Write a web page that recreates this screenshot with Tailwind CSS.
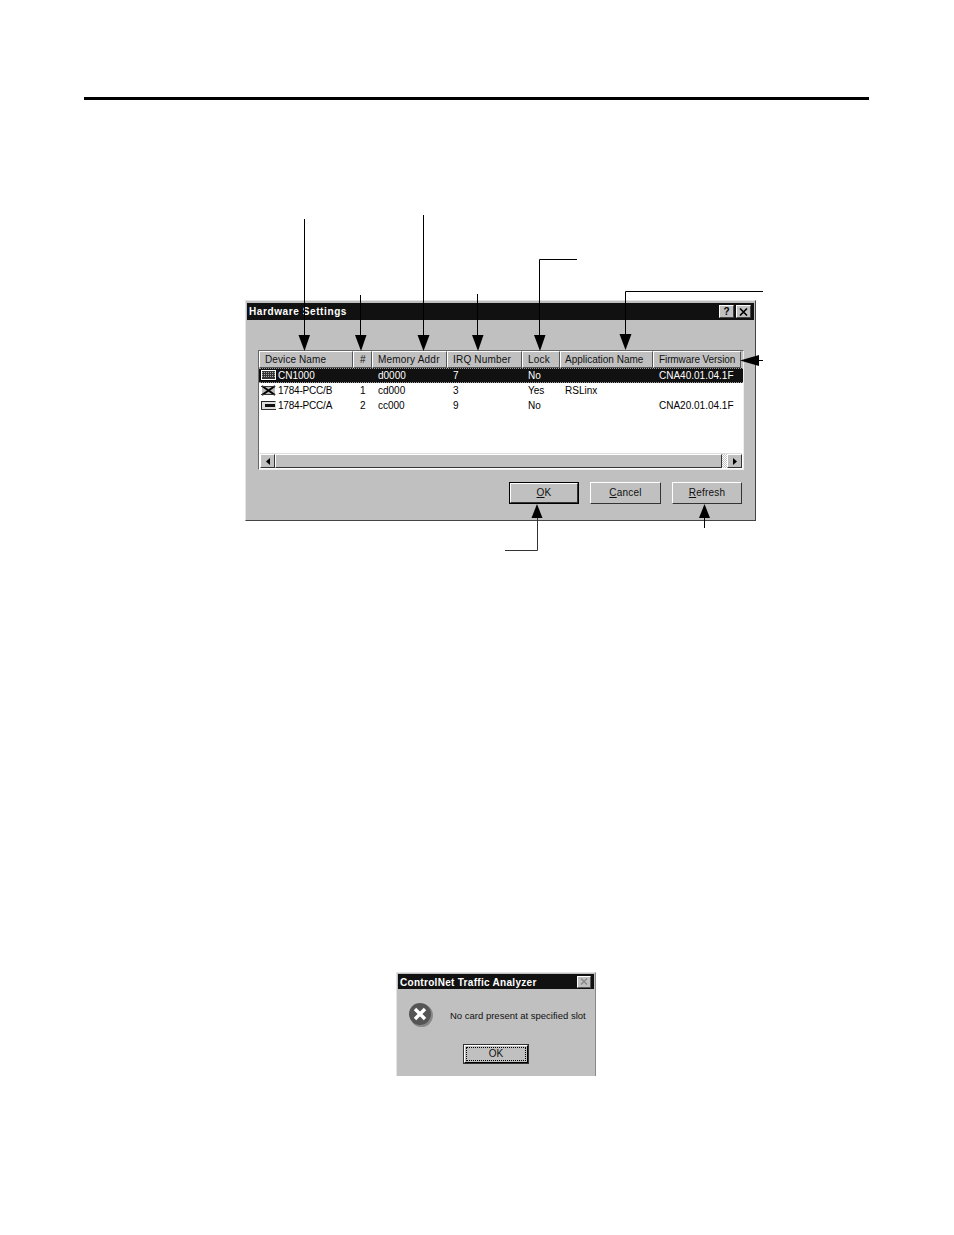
<!DOCTYPE html>
<html>
<head>
<meta charset="utf-8">
<script src="https://cdn.jsdelivr.net/npm/@tailwindcss/browser@4"></script>
</head>
<body class="bg-white">
<div class="relative w-[954px] h-[1235px] bg-white overflow-hidden font-['Liberation_Sans',Arial,sans-serif] text-[10px] leading-none text-black">
  <div class="pt-[97px] px-[84px]"><div class="w-[785px] h-[3px] bg-black"></div></div>

  <!-- Hardware Settings window -->
  <div class="mt-[200px] ml-[245px] w-[511px] h-[221px] bg-[#c0c0c0] border border-t-[#e4e4e4] border-l-[#e4e4e4] border-r-[#444] border-b-[#444] pt-[2px] px-[1px] flex flex-col">
    <div class="h-[17px] bg-[#111] flex items-center justify-between pl-[2px] pr-[3px] text-white font-bold tracking-[0.6px]">
      <span>Hardware Settings</span>
      <div class="flex gap-[2px]">
        <div class="w-[15px] h-[13px] bg-[#c0c0c0] border border-t-white border-l-white border-r-[#444] border-b-[#444] flex items-center justify-center text-black font-bold text-[10px] tracking-normal">?</div>
        <div class="w-[15px] h-[13px] bg-[#c0c0c0] border border-t-white border-l-white border-r-[#444] border-b-[#444] flex items-center justify-center">
          <svg width="9" height="8" viewBox="0 0 9 8"><path d="M1 0.5 L8 7.5 M8 0.5 L1 7.5" stroke="#000" stroke-width="1.6"/></svg>
        </div>
      </div>
    </div>

    <!-- list -->
    <div class="mt-[30px] ml-[11px] w-[486px] h-[120px] bg-white border border-t-[#666] border-l-[#666] border-r-[#eee] border-b-[#eee] flex flex-col">
      <div class="grid grid-cols-[94px_19px_75px_75px_38px_93px_88px] h-[17px] shrink-0 bg-[#c0c0c0] text-[#111]">
        <div class="border border-t-white border-l-white border-r-[#555] border-b-[#555] pl-[5px] flex items-center tracking-[0.1px]">Device Name</div>
        <div class="border border-t-white border-l-white border-r-[#555] border-b-[#555] pl-[6px] flex items-center">#</div>
        <div class="border border-t-white border-l-white border-r-[#555] border-b-[#555] pl-[5px] flex items-center tracking-[0.2px]">Memory Addr</div>
        <div class="border border-t-white border-l-white border-r-[#555] border-b-[#555] pl-[5px] flex items-center tracking-[0.2px]">IRQ Number</div>
        <div class="border border-t-white border-l-white border-r-[#555] border-b-[#555] pl-[5px] flex items-center tracking-[0.2px]">Lock</div>
        <div class="border border-t-white border-l-white border-r-[#555] border-b-[#555] pl-[4px] flex items-center">Application Name</div>
        <div class="border border-t-white border-l-white border-r-[#555] border-b-[#555] pl-[5px] flex items-center whitespace-nowrap overflow-hidden tracking-[-0.1px]">Firmware Version</div>
      </div>
      <div class="grid grid-cols-[94px_19px_75px_75px_38px_93px_88px] h-[15px] shrink-0 items-center bg-[#111] text-white border-y border-dotted border-[#999]">
        <div class="flex items-center gap-[2px] pl-[1px]">
          <svg width="16" height="11" viewBox="0 0 16 11"><rect width="16" height="11" fill="#fff"/><rect x="2" y="1" width="13" height="8" fill="#333"/><path d="M2 2.5h13M2 4.5h13M2 6.5h13" stroke="#aaa" stroke-dasharray="1 1"/><path d="M0 10.5h16" stroke="#000"/><path d="M0.5 0V11" stroke="#000"/></svg>
          <span>CN1000</span>
        </div>
        <div></div><div class="pl-[6px]">d0000</div><div class="pl-[6px]">7</div><div class="pl-[6px]">No</div><div class="pl-[5px]"></div><div class="pl-[6px]">CNA40.01.04.1F</div>
      </div>
      <div class="grid grid-cols-[94px_19px_75px_75px_38px_93px_88px] h-[15px] shrink-0 items-center">
        <div class="flex items-center gap-[2px] pl-[1px]">
          <svg width="16" height="11" viewBox="0 0 16 11"><rect x="2" y="2" width="13" height="7" fill="#bbb"/><path d="M2 1 L15 10 M15 1 L2 10" stroke="#000" stroke-width="2"/><path d="M1 1.5h14M1 9.5h14" stroke="#333"/></svg>
          <span class="tracking-[-0.2px]">1784-PCC/B</span>
        </div>
        <div class="pl-[7px]">1</div><div class="pl-[6px]">cd000</div><div class="pl-[6px]">3</div><div class="pl-[6px]">Yes</div><div class="pl-[5px]">RSLinx</div><div></div>
      </div>
      <div class="grid grid-cols-[94px_19px_75px_75px_38px_93px_88px] h-[15px] shrink-0 items-center">
        <div class="flex items-center gap-[2px] pl-[1px]">
          <svg width="16" height="11" viewBox="0 0 16 11"><rect x="1" y="1.5" width="15" height="8" fill="#ddd"/><path d="M1 1.5H15.5M1.5 1V10" stroke="#222"/><rect x="5" y="4" width="10" height="3" fill="#111"/><path d="M1 9.5h15" stroke="#333"/></svg>
          <span class="tracking-[-0.2px]">1784-PCC/A</span>
        </div>
        <div class="pl-[7px]">2</div><div class="pl-[6px]">cc000</div><div class="pl-[6px]">9</div><div class="pl-[6px]">No</div><div></div><div class="pl-[6px]">CNA20.01.04.1F</div>
      </div>
      <div class="flex-1"></div>
      <!-- scrollbar -->
      <div class="h-[15px] shrink-0 mx-px mb-px bg-[#c0c0c0] flex border-t border-[#ddd]">
        <div class="w-[15px] border border-t-white border-l-white border-r-[#333] border-b-[#333] flex items-center justify-center"><svg width="4" height="7" viewBox="0 0 4 7"><path d="M4 0 L0 3.5 L4 7 Z" fill="#000"/></svg></div>
        <div class="flex-1 border border-t-white border-l-white border-r-[#333] border-b-[#333]"></div>
        <div class="w-[5px] bg-[repeating-conic-gradient(#fff_0_25%,#c0c0c0_0_50%)] bg-[length:2px_2px]"></div>
        <div class="w-[15px] border border-t-white border-l-white border-r-[#333] border-b-[#333] flex items-center justify-center"><svg width="4" height="7" viewBox="0 0 4 7"><path d="M0 0 L4 3.5 L0 7 Z" fill="#000"/></svg></div>
      </div>
    </div>

    <!-- buttons -->
    <div class="mt-[12px] flex justify-end pr-[12px] text-[#111] tracking-[0.2px]">
      <div class="w-[70px] h-[22px] mr-[11px] border border-black">
        <div class="w-full h-full bg-[#c0c0c0] border border-t-white border-l-white border-r-[#333] border-b-[#333] flex items-center justify-center"><span><span class="underline">O</span>K</span></div>
      </div>
      <div class="w-[71px] h-[22px] mr-[11px] bg-[#c0c0c0] border border-t-white border-l-white border-r-[#333] border-b-[#333] flex items-center justify-center"><span><span class="underline">C</span>ancel</span></div>
      <div class="w-[70px] h-[22px] bg-[#c0c0c0] border border-t-white border-l-white border-r-[#333] border-b-[#333] flex items-center justify-center"><span><span class="underline">R</span>efresh</span></div>
    </div>
  </div>

  <!-- ControlNet dialog -->
  <div class="mt-[451px] ml-[396px] w-[200px] h-[104px] bg-[#c0c0c0] border-l border-t border-r border-t-[#e4e4e4] border-l-[#e4e4e4] border-r-[#888] pt-px px-px flex flex-col">
    <div class="h-[15px] bg-[#111] text-white font-bold tracking-[0.3px] flex items-center justify-between pl-[2px] pr-[3px]">
      <span class="translate-y-px">ControlNet Traffic Analyzer</span>
      <div class="w-[14px] h-[12px] bg-[#c0c0c0] border border-t-white border-l-white border-r-[#555] border-b-[#555] flex items-center justify-center">
        <svg width="8" height="7" viewBox="0 0 8 7"><path d="M1 0.5 L7 6.5 M7 0.5 L1 6.5" stroke="#888" stroke-width="1.4"/></svg>
      </div>
    </div>
    <div class="flex items-center mt-[13px] pl-[10px]">
      <svg width="26" height="26" viewBox="0 0 26 26"><circle cx="13.5" cy="13.5" r="11.5" fill="#888"/><circle cx="12" cy="12" r="11" fill="#555"/><path d="M7 7 L17 17 M17 7 L7 17" stroke="#fff" stroke-width="3.4"/></svg>
      <span class="ml-[16px] mt-[2px] text-[#111] text-[9.5px] whitespace-nowrap">No card present at specified slot</span>
    </div>
    <div class="flex justify-center mt-[17px]">
      <div class="w-[64px] h-[18px] bg-[#c0c0c0] border border-t-white border-l-white border-r-black border-b-black shadow-[0_0_0_1px_#333] p-px">
        <div class="w-full h-full border border-dotted border-black flex items-center justify-center text-[#111]">OK</div>
      </div>
    </div>
  </div>

  <!-- leader lines and arrows lying over the figure -->
  <svg class="absolute left-0 top-0" width="954" height="1235" viewBox="0 0 954 1235" fill="none">
    <g stroke="#000" stroke-width="1">
      <path d="M304.5 219V340"/>
      <path d="M360.5 295V340"/>
      <path d="M423.5 215V340"/>
      <path d="M477.5 294V340"/>
      <path d="M577 259.5H539.5V340"/>
      <path d="M763 291.5H625.5V340"/>
      <path d="M763 360.5H750"/>
      <path d="M505 550.5H537.5V515" stroke="#333"/>
      <path d="M704.5 528V515"/>
    </g>
    <g fill="#000">
      <path d="M298.5 335H310L304.5 351Z"/>
      <path d="M355 335H366.5L361 351Z"/>
      <path d="M417.5 335H429.5L423.5 351Z"/>
      <path d="M472 335H483.5L478 351Z"/>
      <path d="M534 335H545.5L540 351Z"/>
      <path d="M619.5 334H631.5L625.5 350Z"/>
      <path d="M740 360.5L759 355V366Z"/>
      <path d="M537 504L531.5 518H542.5Z"/>
      <path d="M704.5 504L699 518H710Z"/>
    </g>
  </svg>
</div>
</body>
</html>
